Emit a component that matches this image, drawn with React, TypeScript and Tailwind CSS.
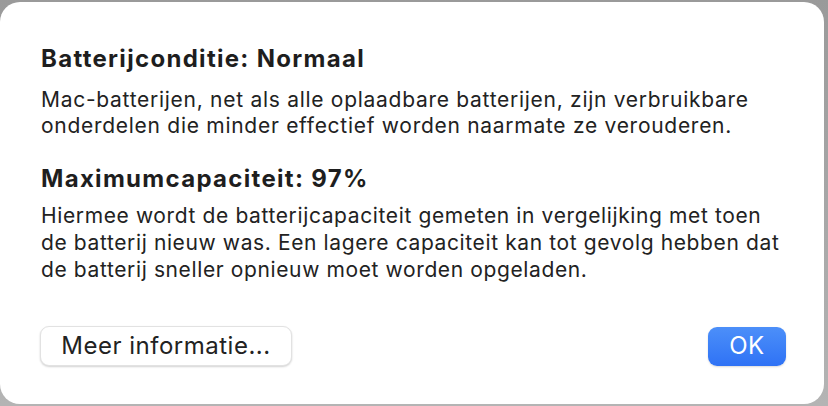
import React from "react";

function App() {
  return (
    <div
      className="w-[828px] h-[406px] bg-gradient-to-b from-[#9a9a9a] to-[#b4b4b4] pt-[2px] pr-[4px] pb-[2px] overflow-hidden"
      style={{ fontFamily: "Inter, 'Noto Sans', sans-serif" }}
    >
      <div className="h-full w-full bg-white rounded-[20px] pl-[41px] pr-[20px] pt-[44px] flex flex-col text-[#222222]">
        <h1 className="text-[24px] leading-[26px] font-bold tracking-[1.3px] text-[#1e1e1e]">Batterijconditie: Normaal</h1>
        <p className="mt-[15px] text-[21px] leading-[26px] tracking-[0.72px]">
          Mac-batterijen, net als alle oplaadbare batterijen, zijn verbruikbare
          <br />
          onderdelen die minder effectief worden naarmate ze verouderen.
        </p>
        <h2 className="mt-[27px] text-[24px] leading-[26px] font-bold tracking-[1.3px] text-[#1e1e1e]">Maximumcapaciteit: 97%</h2>
        <p className="mt-[10px] text-[21px] leading-[27px] tracking-[0.62px]">
          Hiermee wordt de batterijcapaciteit gemeten in vergelijking met toen
          <br />
          de batterij nieuw was. Een lagere capaciteit kan tot gevolg hebben dat
          <br />
          de batterij sneller opnieuw moet worden opgeladen.
        </p>
        <div className="mt-[43px] pr-[18px] flex items-center justify-between">
          <button className="-ml-[1px] h-[40px] w-[252px] rounded-[9px] bg-white text-[24px] tracking-[0.5px] text-[#222222] border border-[#e2e2e2] shadow-[0_1px_2px_rgba(0,0,0,0.18)]">
            Meer informatie...
          </button>
          <button className="h-[39px] w-[78px] rounded-[9px] bg-gradient-to-b from-[#4c8ff9] to-[#2f72f5] text-[24px] tracking-[0.5px] text-white shadow-[0_1px_2px_rgba(0,0,0,0.15)]">
            OK
          </button>
        </div>
      </div>
    </div>
  );
}

export default App;
